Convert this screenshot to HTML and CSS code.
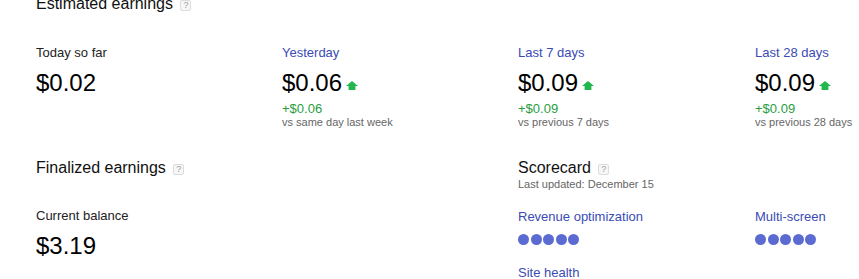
FILE: index.html
```html
<!DOCTYPE html>
<html lang="en">
<head>
  <meta charset="UTF-8">
  <meta name="viewport" content="width=device-width, initial-scale=1.0">
  <title>Home</title>
  <link rel="stylesheet" href="styles.css">
</head>
<body>
  <div class="page">
    <!-- 预估收入 -->
    <div class="section_title">Estimated earnings <span class="help">?</span></div>
    <div class="cols earnings_row">
      <div class="stat">
        <p class="stat_label">Today so far</p>
        <p class="stat_value">$0.02</p>
      </div>
      <div class="stat">
        <p class="stat_label link">Yesterday</p>
        <p class="stat_value">$0.06<svg class="up" viewBox="0 0 12 9" width="12" height="9"><path d="M6 0 L12 5 H9.4 V9 H2.6 V5 H0 Z"/></svg></p>
        <p class="stat_diff">+$0.06</p>
        <p class="stat_note">vs same day last week</p>
      </div>
      <div class="stat">
        <p class="stat_label link">Last 7 days</p>
        <p class="stat_value">$0.09<svg class="up" viewBox="0 0 12 9" width="12" height="9"><path d="M6 0 L12 5 H9.4 V9 H2.6 V5 H0 Z"/></svg></p>
        <p class="stat_diff">+$0.09</p>
        <p class="stat_note">vs previous 7 days</p>
      </div>
      <div class="stat">
        <p class="stat_label link">Last 28 days</p>
        <p class="stat_value">$0.09<svg class="up" viewBox="0 0 12 9" width="12" height="9"><path d="M6 0 L12 5 H9.4 V9 H2.6 V5 H0 Z"/></svg></p>
        <p class="stat_diff">+$0.09</p>
        <p class="stat_note">vs previous 28 days</p>
      </div>
    </div>

    <!-- 已确认收入 + 评分卡 -->
    <div class="cols lower_row">
      <div class="finalized">
        <div class="section_title">Finalized earnings <span class="help">?</span></div>
        <div class="stat balance">
          <p class="stat_label">Current balance</p>
          <p class="stat_value">$3.19</p>
        </div>
      </div>
      <div class="scorecard">
        <div class="section_title">Scorecard <span class="help">?</span></div>
        <p class="updated">Last updated: December 15</p>
        <div class="score_grid">
          <div class="score_item">
            <p class="link">Revenue optimization</p>
            <div class="dots"><span></span><span></span><span></span><span></span><span></span></div>
          </div>
          <div class="score_item">
            <p class="link">Multi-screen</p>
            <div class="dots"><span></span><span></span><span></span><span></span><span></span></div>
          </div>
          <div class="score_item site">
            <p class="link">Site health</p>
          </div>
        </div>
      </div>
    </div>
  </div>
</body>
</html>
```
FILE: styles.css
```css
*{
  margin: 0;
  padding: 0;
}
body {
  font-family: "Liberation Sans", Arial, sans-serif;
  color: #000;
  background-color: #fff;
  overflow: hidden;
}
.page {
  padding-left: 36px;
  margin-top: -6px;
}
.section_title {
  font-size: 16px;
  line-height: 20px;
  color: #111;
}
.help {
  display: inline-block;
  width: 9px;
  height: 9px;
  margin-left: 3px;
  border: 1px solid #dcdcdc;
  border-radius: 2px;
  background-color: #f6f6f6;
  color: #a0a0a0;
  font-size: 9px;
  line-height: 9px;
  text-align: center;
  vertical-align: 1px;
}
.cols {
  display: grid;
  grid-template-columns: 246px 236px 237px 1fr;
}
.earnings_row {
  margin-top: 31px;
}
.stat_label {
  font-size: 13px;
  line-height: 16px;
  color: #222;
}
.link {
  color: #3a4bb5;
  font-size: 13px;
  line-height: 16px;
}
.stat_value {
  margin-top: 8px;
  font-size: 24px;
  line-height: 28px;
}
.up {
  margin-left: 4px;
  vertical-align: 1px;
  fill: #22b74c;
}
.stat_diff {
  margin-top: 4px;
  font-size: 13px;
  line-height: 15px;
  color: #2a9d3f;
}
.stat_note {
  font-size: 11px;
  line-height: 13px;
  color: #666;
}
.lower_row {
  margin-top: 29px;
}
.finalized {
  grid-column: 1 / 3;
}
.balance {
  margin-top: 30px;
}
.scorecard {
  grid-column: 3 / 5;
}
.updated {
  font-size: 11px;
  line-height: 13px;
  color: #666;
}
.score_grid {
  display: grid;
  grid-template-columns: 237px 1fr;
  row-gap: 20px;
  margin-top: 18px;
}
.dots {
  display: flex;
  gap: 1.5px;
  margin-top: 9px;
}
.dots span {
  width: 11px;
  height: 11px;
  border-radius: 50%;
  background-color: #5c6bd2;
}
```
